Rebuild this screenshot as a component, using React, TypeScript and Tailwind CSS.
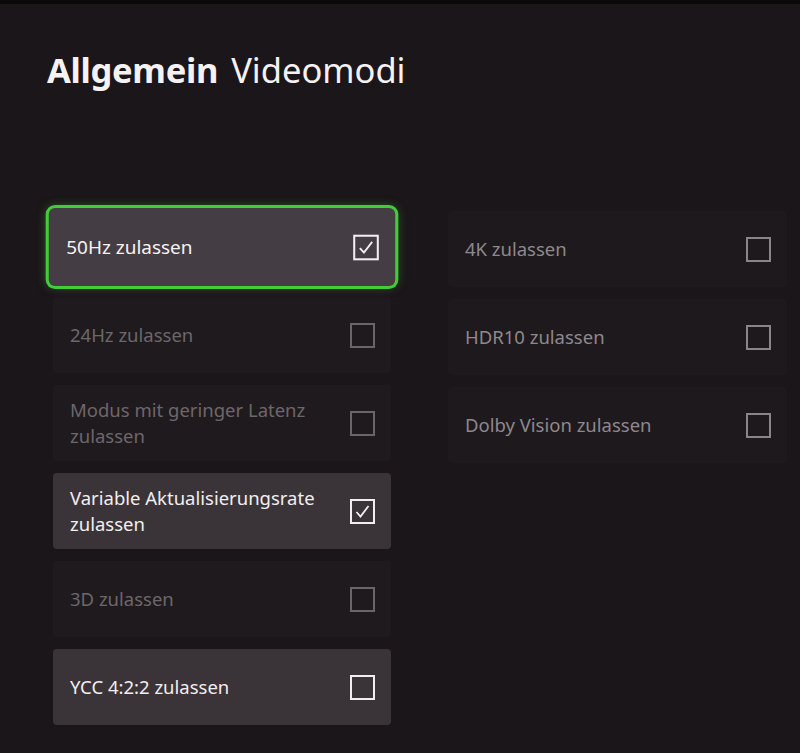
// ── Types ─────────────────────────────────────────────────────────────────────

type State = "focused" | "on" | "disabled" | "muted";

interface Option {
  label:   string;
  checked: boolean;
  state:   State;
}

// ── Data ──────────────────────────────────────────────────────────────────────

const LEFT: Option[] = [
  { label: "50Hz zulassen",                         checked: true,  state: "focused"  },
  { label: "24Hz zulassen",                         checked: false, state: "disabled" },
  { label: "Modus mit geringer Latenz zulassen",    checked: false, state: "disabled" },
  { label: "Variable Aktualisierungsrate zulassen", checked: true,  state: "on"       },
  { label: "3D zulassen",                           checked: false, state: "disabled" },
  { label: "YCC 4:2:2 zulassen",                    checked: false, state: "on"       },
];

const RIGHT: Option[] = [
  { label: "4K zulassen",           checked: false, state: "muted" },
  { label: "HDR10 zulassen",        checked: false, state: "muted" },
  { label: "Dolby Vision zulassen", checked: false, state: "muted" },
];

// ── Checkbox ──────────────────────────────────────────────────────────────────

function Box({ checked, state }: { checked: boolean; state: State }) {
  const edge =
    state === "disabled" ? "border-[#6a6569]" :
    state === "muted"    ? "border-[#8a8589]" :
                           "border-[#f2eef0]";
  return (
    <div className={`w-[25px] h-[25px] shrink-0 border-2 ${edge} flex items-center justify-center`}>
      {checked && (
        <svg viewBox="0 0 21 21" className="w-[21px] h-[21px]" fill="none" stroke="#f2eef0" strokeWidth="1.8">
          <polyline points="4.5,11 8.5,15.5 16.5,5" />
        </svg>
      )}
    </div>
  );
}

// ── Tile ──────────────────────────────────────────────────────────────────────

function Tile({ o }: { o: Option }) {
  const tone =
    o.state === "focused"  ? "bg-[#443d43] text-[#f6f2f4] scale-[1.025] ring-[3px] ring-[#43cc3a] shadow-[0_0_10px_rgba(70,210,60,0.55)] rounded-md" :
    o.state === "on"       ? "bg-[#3a3438] text-[#f2eef0] rounded" :
    o.state === "muted"    ? "bg-[#1e191c] text-[#8e888c] rounded" :
                             "bg-[#1f1a1d] text-[#6d676b] rounded";
  return (
    <div className={`h-[76px] flex items-center gap-4 pl-[17px] pr-4 ${tone}`}>
      <span className="flex-1 text-[18.5px] leading-[26px]">{o.label}</span>
      <Box checked={o.checked} state={o.state} />
    </div>
  );
}

// ── Page ──────────────────────────────────────────────────────────────────────

export default function App() {
  return (
    <div
      className="w-[800px] h-[753px] overflow-hidden bg-[#1b1619] border-t-4 border-[#0b0809] pl-[53px] pt-[45px]"
      style={{ fontFamily: '"Noto Sans", "Open Sans", sans-serif' }}
    >
      <h1 className="text-[34.5px] leading-[42px] text-[#f6f2f4] -ml-[6px]">
        <span className="font-bold tracking-[-0.3px]">Allgemein</span>
        <span className="ml-[13px]">Videomodi</span>
      </h1>

      <div className="mt-[118px] flex gap-[57px]">
        <div className="w-[338px] flex flex-col gap-3">
          {LEFT.map(o => <Tile key={o.label} o={o} />)}
        </div>
        <div className="w-[339px] flex flex-col gap-3 mt-[2px]">
          {RIGHT.map(o => <Tile key={o.label} o={o} />)}
        </div>
      </div>
    </div>
  );
}
